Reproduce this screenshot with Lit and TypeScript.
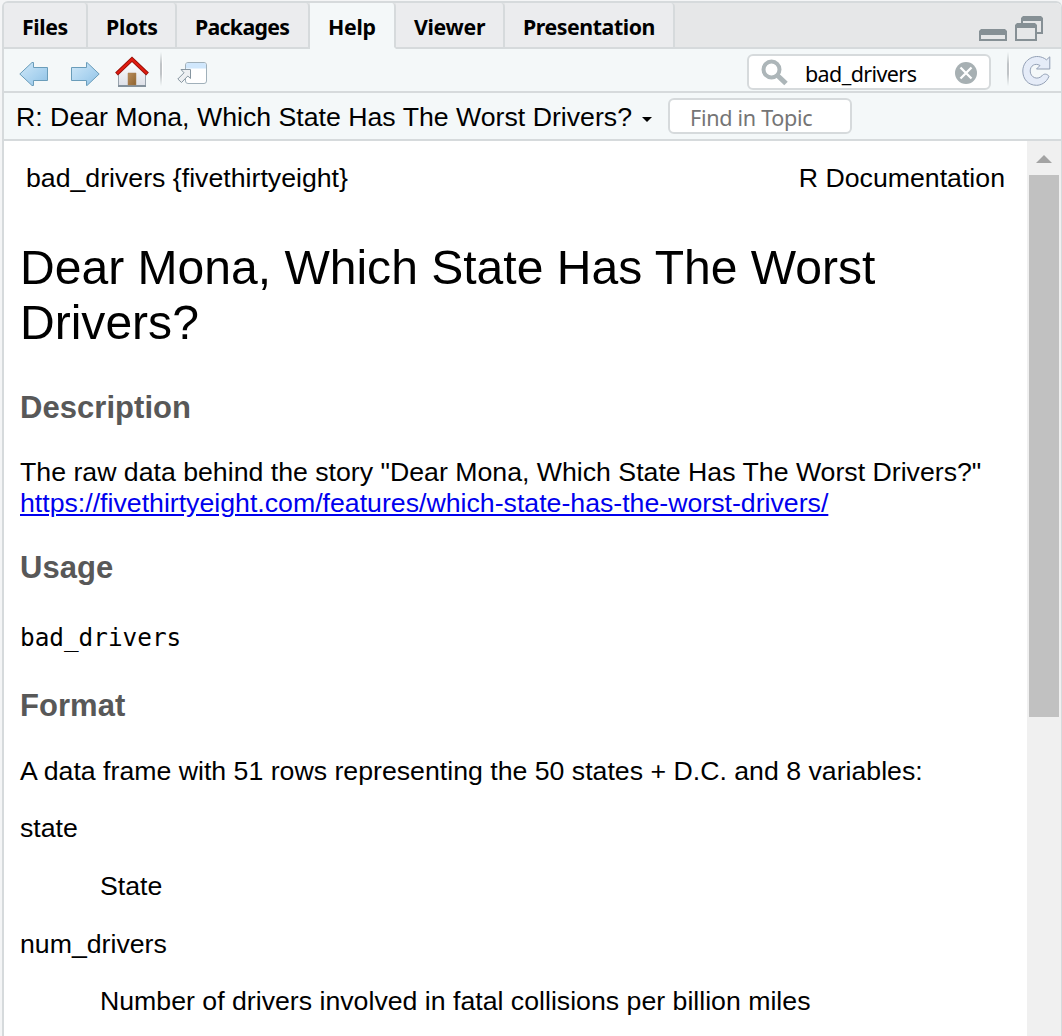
import { LitElement, html, css } from "lit";
import { customElement } from "lit/decorators.js";

const TABS = [
  { label: "Files", cls: "files" },
  { label: "Plots", cls: "plots" },
  { label: "Packages", cls: "packages" },
  { label: "Help", cls: "help" },
  { label: "Viewer", cls: "viewer" },
  { label: "Presentation", cls: "presentation" },
];

@customElement("pane-tabs")
class PaneTabs extends LitElement {
  static styles = css`
    :host { display: flex; height: 46px; background: #e6e7e8; font: 700 21.3px/46px "Noto Sans", "Open Sans", sans-serif; color: #000; }
    .tab { box-sizing: border-box; height: 46px; border-right: 2px solid #d6dadc; border-bottom: 2px solid #d6dadc; background: #ebecee; border-top-right-radius: 4px; white-space: nowrap; padding-left: 18px; line-height: 47px; }
    .files { width: 84px; letter-spacing: -0.4px; }
    .plots { width: 89px; letter-spacing: -0.2px; }
    .packages { width: 133px; letter-spacing: -0.7px; }
    .help { width: 86px; background: #f4f8f9; border-bottom-color: #f4f8f9; letter-spacing: -0.25px; }
    .viewer { width: 109px; letter-spacing: -0.3px; }
    .presentation { width: 170px; letter-spacing: -0.42px; }
    .rest { flex: 1; display: flex; gap: 8px; justify-content: flex-end; border-bottom: 2px solid #d6dadc; padding: 13px 18px 0 0; }
    svg { display: block; }
  `;
  render() {
    return html`
      ${TABS.map((t) => html`<div class="tab ${t.cls}">${t.label}</div>`)}
      <div class="rest">
        <svg width="28" height="26" viewBox="0 0 28 26"><path fill="#869095" fill-rule="evenodd" d="M2 13H26L28 15V25H0V15ZM2 19V23H26V19Z"/></svg>
        <svg width="28" height="26" viewBox="0 0 28 26"><path fill="#869095" fill-rule="evenodd" d="M8 0H26L28 2V18H22V16H26V5H8V7H6V2ZM2 7H20L22 9V25H0V9ZM2 12V23H20V12Z"/></svg>
      </div>`;
  }
}

@customElement("help-toolbar")
class HelpToolbar extends LitElement {
  static styles = css`
    :host { display: flex; box-sizing: border-box; height: 44px; background: #f4f8f9; border-bottom: 2px solid #d6dadc; padding: 3px 0 0 14px; }
    svg { display: block; flex: none; }
    .fwd { margin-left: 20px; }
    .home { margin-left: 13px; }
    .sep { width: 3px; height: 34px; margin-left: 11px; background: linear-gradient(90deg, #c0c4c7 0 2px, #fff 2px); -webkit-mask-image: linear-gradient(transparent, #000 35%, #000 65%, transparent); mask-image: linear-gradient(transparent, #000 35%, #000 65%, transparent); }
    .popout { margin-left: 13px; }
    .search { box-sizing: border-box; display: flex; width: 244px; height: 36px; margin: 2px 0 0 auto; background: #fff; border: 2px solid #d6dadc; border-radius: 6px; }
    .glass { margin: 3px 0 0 12px; }
    .query { flex: 1; margin-left: 16px; font: 21.5px/36px "Noto Sans", "Open Sans", sans-serif; letter-spacing: -0.6px; white-space: nowrap; }
    .clear { margin: 6px 12px 0 0; }
    .sep2 { margin-left: 16px; }
    .refresh { margin: 3px 9px 0 12px; }
  `;
  render() {
    return html`
      <svg width="32" height="36" viewBox="18 52 32 36"><defs><linearGradient id="a" x2="1" y2="1"><stop stop-color="#d0e8f8"/><stop offset=".6" stop-color="#a9d2ef"/><stop offset="1" stop-color="#8fc0e3"/></linearGradient></defs><path d="M19.8 74 32 62.5H33.5V67.5H47.5V80.5H33.5V85.5H32Z" fill="url(#a)" stroke="#6a9dba" stroke-linejoin="round"/></svg>
      <svg class="fwd" width="32" height="36" viewBox="70 52 32 36"><defs><linearGradient id="b" x2="1" y2="1"><stop stop-color="#d0e8f8"/><stop offset=".6" stop-color="#a9d2ef"/><stop offset="1" stop-color="#8fc0e3"/></linearGradient></defs><path d="M99.2 74 87 62.5H86.5V67.5H71.5V80.5H86.5V85.5H87Z" fill="url(#b)" stroke="#6a9dba" stroke-linejoin="round"/></svg>
      <svg class="home" width="34" height="36" viewBox="115 52 34 36"><defs><linearGradient id="w" x2="0" y2="1"><stop stop-color="#fff"/><stop offset="1" stop-color="#dcdfe7"/></linearGradient><linearGradient id="d" x2="1" y2="1"><stop stop-color="#b98c5b"/><stop offset="1" stop-color="#8e632f"/></linearGradient></defs><path d="M118.5 73 132 60 145.500 73V86.500H118.500Z" fill="url(#w)" stroke="#98a3ad"/><path d="M118 86H146" stroke="#84919c" stroke-width="2"/><path d="M128 73H136V85H128Z" fill="url(#d)" stroke="#a77e50" stroke-width=".5"/><path d="M116.500 74 132 59.300 147.500 74" fill="none" stroke="#951008" stroke-width="4"/><path d="M117 73.500 132 59.300 147 73.500" fill="none" stroke="#e11b10" stroke-width="2.300"/></svg>
      <div class="sep"></div>
      <svg class="popout" width="32" height="36" viewBox="176 52 32 36"><rect x="185.500" y="62.500" width="21" height="21" rx="2.500" fill="#fff" stroke="#a0b0ba"/><path d="M186 68.500V65q0-2 2-2H204q2 0 2 2V68.500Z" fill="#d0e7fc"/><path d="M181 69.500H190.500V78.500L187.800 76 181.500 82.500 177.800 79 184 72.800Z" fill="#eef0f2" stroke="#8695a0"/></svg>
      <div class="search">
        <svg class="glass" width="28" height="28" viewBox="0 0 28 28"><circle cx="10.500" cy="10.500" r="8" fill="none" stroke="#adb6b9" stroke-width="4"/><path d="M16 16 25 24.500" stroke="#adb6b9" stroke-width="5"/></svg>
        <span class="query">bad_drivers</span>
        <svg class="clear" width="22" height="22" viewBox="0 0 22 22"><circle cx="11" cy="11" r="11" fill="#a7b0b3"/><path d="M5.500 5.500 16.500 16.500M16.500 5.500 5.500 16.500" stroke="#fff" stroke-width="2.300"/></svg>
      </div>
      <div class="sep sep2"></div>
      <svg class="refresh" width="30" height="32" viewBox="0 0 30 32"><path d="M24.500 4.800 27.800 1.800V14H14.500L18 10.500C13 7.500 8.200 10.800 8.200 16C8.200 22.500 15.500 25.500 20 20.800C21.500 18.500 25 18.500 27 21.200C24.500 28 18.500 30.300 14.500 30.300C6 30.300 .8 24 .8 16C.8 4 14.500-3 24.500 4.800Z" fill="#e5ecf8" stroke="#929fb4"/></svg>`;
  }
}

@customElement("topic-bar")
class TopicBar extends LitElement {
  static styles = css`
    :host { display: flex; box-sizing: border-box; height: 48px; background: #f4f8f9; border-bottom: 2px solid #d6dadc; padding-left: 12px; }
    .title { display: flex; width: 640px; }
    .topic { font: 26.7px/48px "Liberation Sans", Arial, sans-serif; white-space: nowrap; }
    .caret { margin: 24px 0 0 10px; }
    .find { box-sizing: border-box; width: 184px; height: 36px; margin: 5px 0 0 12px; border: 2px solid #d6dadc; border-radius: 6px; background: #fff; padding-left: 20px; color: #757575; font: 21.6px/36px "Noto Sans", "Open Sans", sans-serif; letter-spacing: -0.3px; white-space: nowrap; }
  `;
  render() {
    return html`
      <div class="title"><span class="topic">R: Dear Mona, Which State Has The Worst Drivers?</span>
        <svg class="caret" width="10" height="5" viewBox="0 0 10 5"><path d="M0 0H10L5 5Z"/></svg></div>
      <div class="find">Find in Topic</div>`;
  }
}

@customElement("help-page")
class HelpPage extends LitElement {
  static styles = css`
    :host { display: block; flex: 1; min-width: 0; padding: 22px 16px 0; font: 26.7px/31px "Liberation Sans", Arial, sans-serif; color: #000; white-space: nowrap; }
    .head { display: flex; justify-content: space-between; padding: 0 6px; }
    h2, h3, p, pre, dl, dt, dd { margin: 0; }
    h2 { margin-top: 46px; font: 400 48.05px/55px "Liberation Sans", Arial, sans-serif; }
    h3 { margin-top: 31px; font: 700 31px/36px "Liberation Sans", Arial, sans-serif; letter-spacing: 0.05px; color: #585858; }
    .first { margin-top: 40px; }
    .fmt { margin-top: 35px; }
    p { margin-top: 31px; }
    a { color: #0000ee; text-decoration: underline; }
    pre { margin-top: 36px; font: 24.35px/31px "DejaVu Sans Mono", monospace; }
    .lead { margin-top: 32px; }
    dt { margin-top: 26px; }
    dd { margin: 27px 0 0 80px; }
    .last { margin-top: 26px; }
    .next { margin-top: 27px; }
  `;
  render() {
    return html`
      <div class="head"><span>bad_drivers {fivethirtyeight}</span><span>R Documentation</span></div>
      <h2>Dear Mona, Which State Has The Worst<br>Drivers?</h2>
      <h3 class="first">Description</h3>
      <p>The raw data behind the story "Dear Mona, Which State Has The Worst Drivers?"<br><a>https://fivethirtyeight.com/features/which-state-has-the-worst-drivers/</a></p>
      <h3>Usage</h3>
      <pre>bad_drivers</pre>
      <h3 class="fmt">Format</h3>
      <p class="lead">A data frame with 51 rows representing the 50 states + D.C. and 8 variables:</p>
      <dl>
        <dt>state</dt><dd>State</dd>
        <dt class="next">num_drivers</dt><dd class="last">Number of drivers involved in fatal collisions per billion miles</dd>
      </dl>`;
  }
}

@customElement("app-root")
class AppRoot extends LitElement {
  static styles = css`
    :host { display: block; box-sizing: border-box; width: 1062px; height: 1036px; padding: 1px 0 0 2px; background: #f4f5f6; overflow: hidden; }
    .pane { display: flex; flex-direction: column; box-sizing: border-box; width: 1060px; height: 1035px; border: solid #d6dadc; border-width: 2px 1px 0 2px; border-radius: 6px 6px 0 0; background: #fff; overflow: hidden; }
    .body { display: flex; flex: 1; min-height: 0; }
    .scroll { box-sizing: border-box; width: 34px; background: #f0f0f0; padding: 14px 2px 0; }
    .up { display: block; margin-left: 7px; }
    .thumb { height: 542px; margin-top: 12px; background: #c1c1c1; }
  `;
  render() {
    return html`<div class="pane">
      <pane-tabs></pane-tabs>
      <help-toolbar></help-toolbar>
      <topic-bar></topic-bar>
      <div class="body">
        <help-page></help-page>
        <div class="scroll"><svg class="up" width="16" height="8" viewBox="0 0 16 8"><path d="M0 8 8 0 16 8Z" fill="#a3a3a3"/></svg><div class="thumb"></div></div>
      </div>
    </div>`;
  }
}
